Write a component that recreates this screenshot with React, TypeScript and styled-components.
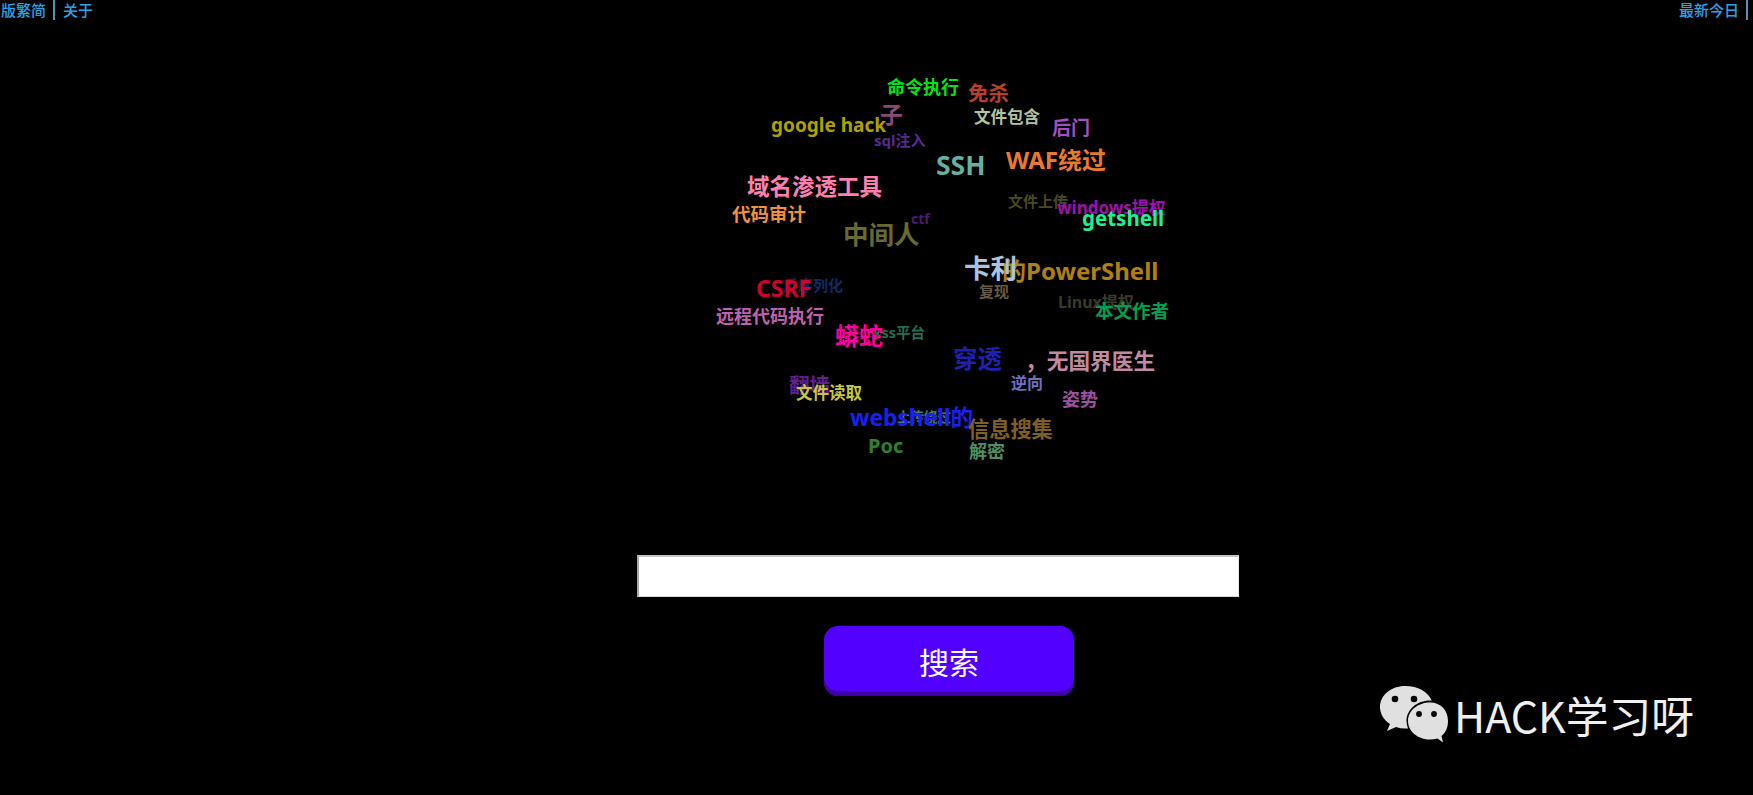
import React from "react";
import styled, { createGlobalStyle } from "styled-components";

const words = [
  { text: "命令执行", x: 887, y: 87, size: 18, color: "#00e51a" },
  { text: "免杀", x: 968, y: 93, size: 20.5, color: "#b8402a" },
  { text: "子", x: 880, y: 114, size: 23, color: "#8a4a78" },
  { text: "google hack", x: 771, y: 125, size: 19, color: "#b0a000" },
  { text: "文件包含", x: 974, y: 117, size: 16.5, color: "#b0c4a0" },
  { text: "后门", x: 1052, y: 128, size: 19, color: "#a050c0" },
  { text: "sql注入", x: 874, y: 140, size: 15, color: "#5a2a90" },
  { text: "SSH", x: 936, y: 165, size: 26.5, color: "#66b0a0" },
  { text: "WAF绕过", x: 1006, y: 160, size: 24, color: "#e87a30" },
  { text: "域名渗透工具", x: 747, y: 187, size: 22.5, color: "#ff80b0" },
  { text: "文件上传", x: 1008, y: 201, size: 15, color: "#4a4a20" },
  { text: "windows提权", x: 1057, y: 207, size: 17, color: "#a010b0" },
  { text: "getshell", x: 1082, y: 218, size: 20.5, color: "#20f090" },
  { text: "代码审计", x: 732, y: 214, size: 18.5, color: "#f09040" },
  { text: "ctf", x: 911, y: 219, size: 14, color: "#4a1a70" },
  { text: "中间人", x: 843, y: 235, size: 25.5, color: "#6a6a30" },
  { text: "的PowerShell", x: 1002, y: 271, size: 24, color: "#b08010" },
  { text: "卡利", x: 964, y: 268, size: 26.5, color: "#a8c4e0" },
  { text: "反序列化", x: 783, y: 285, size: 15, color: "#102a60" },
  { text: "CSRF", x: 756, y: 288, size: 23, color: "#d0002a" },
  { text: "复现", x: 979, y: 291, size: 15, color: "#6a5a40" },
  { text: "Linux提权", x: 1058, y: 302, size: 16, color: "#3a3a2a" },
  { text: "本文作者", x: 1095, y: 311, size: 18.5, color: "#00a050" },
  { text: "远程代码执行", x: 716, y: 316, size: 18, color: "#c060b0" },
  { text: "xss平台", x: 873, y: 332, size: 14.5, color: "#207050" },
  { text: "蟒蛇", x: 835, y: 336, size: 24, color: "#ff00a0" },
  { text: "穿透", x: 953, y: 359, size: 24.5, color: "#2020b0" },
  { text: "，无国界医生", x: 1025, y: 361, size: 21.7, color: "#c08aa0" },
  { text: "逆向", x: 1011, y: 383, size: 16, color: "#7070c0" },
  { text: "翻墙", x: 789, y: 385, size: 20.5, color: "#602090" },
  { text: "文件读取", x: 796, y: 393, size: 16.5, color: "#c8c840" },
  { text: "姿势", x: 1062, y: 399, size: 18, color: "#a050a0" },
  { text: "上传绕过", x: 897, y: 418, size: 13.5, color: "#408070" },
  { text: "webshell的", x: 850, y: 418, size: 22.7, color: "#1a20f0" },
  { text: "信息搜集", x: 968, y: 429, size: 21.2, color: "#806020" },
  { text: "Poc", x: 868, y: 446, size: 20, color: "#308030" },
  { text: "解密", x: 969, y: 451, size: 18, color: "#509060" },
];

const App = () => {
  return (
    <Page>
      <GlobalStyle />
      <TopBar>
        <TopGroup>
          <TopLink $divider>版繁简</TopLink>
          <TopLink>关于</TopLink>
        </TopGroup>
        <TopGroup>
          <TopLink $divider>最新今日</TopLink>
        </TopGroup>
      </TopBar>

      <Cloud>
        {words.map((word) => (
          <Word
            key={word.text}
            style={{
              left: word.x,
              top: word.y - CLOUD_TOP,
              fontSize: word.size,
              color: word.color,
            }}
          >
            {word.text}
          </Word>
        ))}
      </Cloud>

      <SearchForm>
        <SearchInput type="text" />
        <SearchButton type="button">搜索</SearchButton>
      </SearchForm>

      <Watermark>
        <svg width="68" height="58" viewBox="0 0 68 58">
          <path
            d="M25 1C11.500 1 0 10 0 22c0 7 4 13 10 17l-3 7 9-4c3 1 6 1.500 9 1.500 1 0 2 0 3-.1C27 41 26.500 38.500 26.500 36c0-11.500 10.500-20.500 23.500-20.500.6 0 1.200 0 1.700.1C48.500 7 37.800 1 25 1z"
            fill="#e0e0e0"
          />
          <path
            d="M50 17.500c-12 0-22 8-22 18.500s10 18.500 22 18.500c2.500 0 5-.4 7.500-1.100L63 57.500l-1.500-6.500C66 47.500 68 42 68 36c0-10.500-7-18.500-18-18.500z"
            fill="#e0e0e0"
          />
          <circle cx="15" cy="14" r="3.300" fill="#000" />
          <circle cx="34" cy="14" r="3.300" fill="#000" />
          <circle cx="39" cy="29" r="2.900" fill="#000" />
          <circle cx="54" cy="29" r="2.900" fill="#000" />
        </svg>
        <WatermarkText>HACK学习呀</WatermarkText>
      </Watermark>
    </Page>
  );
};

const CLOUD_TOP = 60;

const GlobalStyle = createGlobalStyle`
  html, body {
    margin: 0;
    padding: 0;
    background: #000;
  }
`;

const Page = styled.div`
  position: relative;
  width: 1753px;
  height: 795px;
  overflow: hidden;
  background: #000;
  font-family: "Noto Sans", "Noto Sans CJK SC", sans-serif;
`;

const TopBar = styled.div`
  display: flex;
  justify-content: space-between;
  height: 20px;
  padding: 0 5px 0 1px;
`;

const TopGroup = styled.div`
  display: flex;
  gap: 8px;
`;

const TopLink = styled.a<{ $divider?: boolean }>`
  font-family: "Noto Sans CJK SC", sans-serif;
  font-size: 15px;
  font-weight: 500;
  line-height: 19px;
  color: #2ba3ec;
  cursor: pointer;
  ${(p) =>
    p.$divider &&
    `
    padding-right: 7px;
    border-right: 2px solid #5a8fb0;
  `}
`;

const Cloud = styled.div`
  position: relative;
  height: 495px;
  margin-top: 40px;
`;

const Word = styled.span`
  position: absolute;
  font-weight: 700;
  line-height: 1;
  white-space: nowrap;
  transform: translateY(-50%);
`;

const SearchForm = styled.form`
  display: flex;
  flex-direction: column;
  align-items: flex-start;
  width: 602px;
  margin: 0 0 0 637px;
`;

const SearchInput = styled.input`
  box-sizing: border-box;
  width: 602px;
  height: 42px;
  padding: 1px 2px;
  background: #fff;
  border-style: solid;
  border-width: 2px 1px 1px 2px;
  border-color: #c4c4c4 #e4e4e4 #d8d8d8 #a8a8a8;
  outline: none;
`;

const SearchButton = styled.button`
  width: 250px;
  height: 70px;
  margin: 29px 0 0 187px;
  padding: 0;
  background: #5200ff;
  border: none;
  border-radius: 14px;
  box-shadow: inset 0 -5px 0 #3f00a8;
  color: #fff;
  font-family: "Noto Sans CJK SC", sans-serif;
  font-size: 30px;
  line-height: 1;
  cursor: pointer;
`;

const Watermark = styled.div`
  position: absolute;
  left: 1380px;
  top: 685px;
  display: flex;
  align-items: center;
  gap: 6px;
`;

const WatermarkText = styled.span`
  font-family: "Noto Sans CJK SC", sans-serif;
  font-size: 42.8px;
  font-weight: 400;
  line-height: 58px;
  color: #f0f0f0;
  white-space: nowrap;
`;

export default App;
